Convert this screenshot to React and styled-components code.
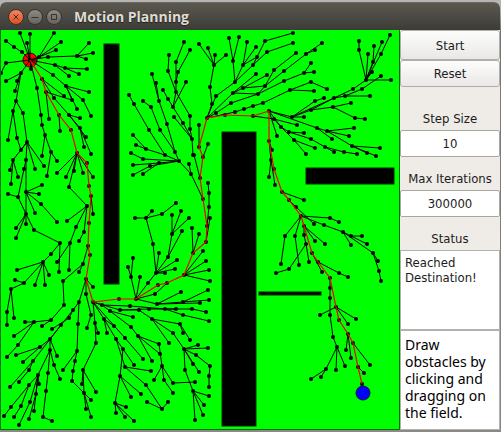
import React from "react";
import styled, { createGlobalStyle } from "styled-components";

const GlobalStyle = createGlobalStyle`
  * { box-sizing: border-box; }
  body { margin: 0; background: #6b6966; }
`;

const Desktop = styled.div`
  padding: 2px 1px 2px 0;
  background: linear-gradient(#b4b4b4, #b4b4b4 8px, #777471 30px, #8b8986);
  font-family: "DejaVu Sans Condensed", "DejaVu Sans", sans-serif;
  font-size: 13px;
  color: #1c1c1c;
`;

const AppWindow = styled.main`
  border-radius: 6px 6px 0 0;
  overflow: hidden;
  background: #efebe7;
`;

const TitleBar = styled.header`
  display: flex;
  align-items: center;
  gap: 3px;
  height: 28px;
  padding: 0 8px;
  background: linear-gradient(#5b5850, #3c3b37);
  border-top: 1px solid #6a675f;
`;

const WindowButton = styled.button`
  display: flex;
  width: 16px;
  height: 16px;
  padding: 0;
  border: 1px solid #35342f;
  border-radius: 50%;
  color: #34332e;
  background: ${(p) =>
    p.$close
      ? "linear-gradient(#f58560, #e2501f)"
      : "linear-gradient(#8c8a82, #66645d)"};
`;

const Title = styled.h1`
  margin: 0 0 0 9px;
  font: bold 14px/20px "Open Sans", "Noto Sans", sans-serif;
  color: #dfdbd2;
  text-shadow: 0 1px 1px #222;
`;

const Content = styled.div`
  display: grid;
  grid-template-columns: minmax(0, 1fr) 100px;
`;

const Field = styled.svg`
  display: block;
  width: 100%;
  height: auto;
  background: #00ff00;
`;

const Sidebar = styled.form`
  display: flex;
  flex-direction: column;
`;

const ActionButton = styled.button`
  height: ${(p) => (p.$tall ? 30 : 27)}px;
  padding: 0;
  border: 1px solid #b1ada9;
  border-radius: 3px;
  background: linear-gradient(#fdfdfd, #eae8e6);
  font: inherit;
  color: inherit;
`;

const Group = styled.div`
  display: flex;
  flex-direction: column;
`;

const Label = styled.label`
  padding-top: ${(p) => (p.$spaced ? 24 : 14)}px;
  line-height: 16px;
  padding-bottom: 3px;
  text-align: center;
  white-space: nowrap;
`;

const NumberBox = styled.input`
  width: 100%;
  height: 27px;
  padding: 0;
  border: 1px solid #aaa6a2;
  border-radius: 2px;
  background: #fff;
  font: inherit;
  color: inherit;
  text-align: center;
`;

const StatusBox = styled.textarea`
  display: block;
  width: 100%;
  height: 81px;
  padding: 4px;
  border: 1px solid #b4b0ac;
  border-bottom-width: 2px;
  outline: none;
  resize: none;
  overflow: hidden;
  background: #fff;
  font: inherit;
  line-height: 15px;
  color: inherit;
`;

const Help = styled.p`
  flex: 1;
  margin: 0;
  padding: 5px 4px;
  border: 1px solid #b4b0ac;
  border-top: 0;
  background: #fff;
  color: #000;
  font: 14px/17px "Noto Sans", sans-serif;
`;

const PATH =
  "30,60 42,79 46,92 59,115 71,130 77,153 87,163 89,186 91,196 89,223 88,246 90,255 86,279 93,302 119,299 136,299 158,285 167,283 184,275 193,253 206,242 207,226 203,199 200,178 203,157 199,147 207,118 225,115 253,116 269,111 269,141 274,169 282,192 289,200 301,216 304,226 312,253 318,262 330,278 336,307 339,320 348,334 353,343 358,367 362,384";

const BRANCHES = `
30,60 20,33|30,60 30,34|30,60 27,43|30,60 22,52 14,47 6,41|30,60 6,63 1,73
30,60 39,57 54,33|39,57 61,42|39,57 56,50|30,60 48,57 77,56 89,43|77,56 93,53|77,56 86,59
30,60 55,65 65,68 87,69|55,65 69,76|65,68 79,74|30,60 53,75 66,86 89,92|66,86 83,100 91,116
66,86 72,100|66,86 77,109|30,60 31,69|30,60 37,88 41,115 42,125 45,135 42,156|45,135 51,152
30,60 21,73 6,81|21,73 17,81|21,73 15,91|21,73 16,101 13,111 8,140|13,111 17,138 21,150|16,101 23,113 27,142
42,79 64,96|42,79 54,98 69,115 80,118|46,92 72,100|46,92 49,119|69,115 80,128 84,147|69,115 86,137|80,128 91,154|59,115 60,131
77,153 57,173|77,153 66,177|77,153 74,171|77,153 83,173|77,153 93,177|77,153 69,187 87,206 67,221
87,206 76,227 70,243 69,270|70,243 57,262|87,206 84,232 79,241|91,196 93,214
27,142 13,160 10,170|13,160 11,184|13,160 18,177|27,142 21,150|27,142 26,160 24,169 18,197 8,194|18,197 26,214
27,142 35,169|27,142 44,166|26,160 26,192 42,185|26,192 39,194|26,192 41,204 57,222|26,192 35,213|26,192 26,214
26,214 16,228|26,214 16,238|26,214 26,224|26,214 34,230 60,243 51,254 43,262 17,270|60,243 59,272
43,262 24,283 15,280|43,262 35,285|43,262 45,285|43,262 49,275|24,283 11,289 7,312 7,325|11,289 14,318
51,152 47,176|51,152 57,161|88,246 83,264 79,272|83,264 63,281 64,305 51,320 34,322 25,322|51,320 42,326
34,322 14,336|34,322 18,345 7,357|86,279 93,287|86,279 86,294 91,315 87,328
86,279 79,302 73,310 69,318 52,329|79,302 78,324 77,351 63,370|77,351 75,361 73,371 72,381 84,393
73,310 61,325 50,339 40,347 16,355|40,347 23,362|50,339 57,356|61,325 33,361 29,370 19,382|33,361 10,387
50,339 50,350 38,375|50,350 54,365 60,379|50,350 48,373 46,391 43,417 52,421
38,375 29,385 11,407 4,416|29,385 21,406 14,417|38,375 30,402 19,425|38,375 36,394 29,419|38,375 34,411|38,375 39,384
93,302 95,323 96,343 83,370|95,323 98,333|83,370 82,384|83,370 96,392|83,370 84,393 91,400|84,393 86,409|84,393 91,417
93,302 102,305 130,306 165,309 192,309 206,312|93,302 120,310 149,309 176,309|165,309 183,315 209,321|102,305 110,311 133,317
120,310 139,310 152,319 180,324 183,333|180,324 190,340|152,319 173,333 184,349|152,319 169,343
184,349 198,345|184,349 208,348|184,349 196,355 210,366 209,376 209,387|184,349 193,364|184,349 199,372|184,349 185,370 193,391
193,391 209,396|193,391 204,405|193,391 203,415|193,391 195,420
110,311 131,327 138,336 159,344|138,336 160,354|138,336 152,361|159,344 162,366 154,380|162,366 164,380 173,393|162,366 173,383 195,382
93,302 104,319 114,326|104,319 107,333|93,302 125,338 143,359|104,319 116,339 123,349 134,365|116,339 125,367 151,371
125,367 146,385 162,409 147,402|162,409 168,402|123,349 120,376 131,397|120,376 141,394|120,376 115,403 126,407|115,403 116,413|115,403 125,417|115,403 134,421
136,299 155,294 167,283|136,299 148,283 156,273|136,299 140,277|136,299 131,277 133,258|131,277 128,267
136,299 157,304 181,292|157,304 183,302 208,290|183,302 209,300|157,304 200,303
184,275 210,281|184,275 209,270|184,275 206,261|184,275 203,251
156,273 159,253|156,273 177,260|156,273 175,269|156,273 165,273|156,273 168,257 182,231|168,257 172,234 172,215|172,234 181,211|172,234 189,218
156,273 153,244 146,218 135,218|146,218 152,211|146,218 162,214 176,203
193,253 192,228|193,253 199,234|206,242 210,218|207,226 209,207 209,193 208,183
203,199 191,174 189,164|191,174 179,161|200,178 194,155|203,157 208,144|199,147 199,125
179,161 165,155|179,161 175,152|179,161 159,163 133,165|179,161 143,159 131,153|179,161 150,166 133,175|159,163 143,174
193,155 192,139 174,117|192,139 183,123 173,107|192,139 190,129 190,116 176,92
173,107 168,99 163,90|173,107 186,82|173,107 176,92 176,82 178,72 190,50|176,82 176,62 184,42|176,92 168,71 169,55
175,152 167,124 159,101 156,83|159,101 152,74|175,152 160,130 151,107 143,101|165,155 149,130 134,104 129,95
165,155 146,149 133,135|146,149 136,145
207,118 212,104 210,87 214,65 199,44|214,65 208,48|214,65 215,55|214,65 226,55
207,118 216,96 235,82 233,61 229,38|233,61 239,37|235,82 243,65 247,42|243,65 256,47|243,65 257,57
235,82 253,65 265,41 293,33|253,65 267,52 293,43|207,118 233,93 256,74|233,93 243,88
207,118 216,113 231,103 258,94|207,118 235,112 244,109 253,106 263,103 290,90 311,82 327,89|290,90 314,91
243,88 265,86 274,70 296,53|243,88 267,75|265,86 284,71 306,54 315,50|306,54 322,43|233,93 258,94
258,94 265,86|258,94 284,81 304,73 311,63|304,73 314,72
253,116 274,119 297,125|269,111 277,136|269,111 281,127|269,111 292,117 304,117
292,117 315,101 324,98|292,117 311,110 334,98 345,96 370,96|292,117 334,98 353,89 366,80|345,96 362,89 381,76
311,110 333,107 351,103|333,107 355,118 365,119
366,80 391,80|366,80 359,50 359,41|366,80 368,54|366,80 373,62 374,46|366,80 372,72|366,80 381,54 390,35|366,80 382,42
274,119 281,127 289,132 304,133|269,111 317,128 327,131 354,128|327,131 349,136|327,131 352,146 380,148|352,146 367,153|352,146 376,156
317,128 332,139|289,132 311,139 325,147 334,152|325,147 344,152 357,154|281,127 294,140 315,148|294,140 306,154
269,141 272,150|269,141 271,160 269,177|271,160 275,185|282,192 304,200|289,200 296,207 314,224
301,216 330,218 339,222|301,216 324,225 343,232 351,245|343,232 351,236 362,236|351,236 367,244
343,232 373,253 378,261|373,253 379,271 381,281
301,216 285,236 281,264|301,216 295,236 299,265|304,226 304,235 306,244 289,269 276,273|306,244 309,262|304,226 315,241|304,226 325,244
312,253 322,272|318,262 339,273 348,277
330,278 330,288 330,298 330,315 333,337 337,347 326,369 311,379|326,369 321,377|337,347 336,370|337,347 345,366
336,307 320,315|336,307 348,324|336,307 356,319|348,334 346,350|348,334 351,358|353,343 370,365|358,367 364,373
`.trim().split(/[|\n]/);

const OBSTACLES = [
  { x: 104, y: 44, width: 15, height: 240 },
  { x: 222, y: 132, width: 34, height: 294 },
  { x: 306, y: 168, width: 88, height: 16 },
  { x: 259, y: 292, width: 62, height: 3 },
];

const NODES = [...new Set([...BRANCHES, PATH].join(" ").split(" "))].map((p) =>
  p.split(",").map(Number)
);

function PlannerField() {
  return (
    <Field viewBox="0 30 400 400" role="img" aria-label="Search tree and obstacles">
      {OBSTACLES.map((o) => (
        <rect key={`${o.x}-${o.y}`} {...o} stroke="#002a00" />
      ))}
      <circle cx="30" cy="60" r="7" fill="#f00" stroke="#400" />
      {BRANCHES.map((points) => (
        <polyline key={points} points={points} fill="none" stroke="#000" />
      ))}
      {NODES.map(([x, y]) => (
        <circle key={`${x}-${y}`} cx={x} cy={y} r="2" />
      ))}
      <polyline points={PATH} fill="none" stroke="#f00000" strokeWidth="1.2" />
      <circle cx="363" cy="393" r="7" fill="#00f" stroke="#001040" />
      <path d="M.5 30V429.5H399.5V30" fill="none" stroke="#087008" />
    </Field>
  );
}

function Glyph({ d }) {
  return (
    <svg width="14" height="14" viewBox="0 0 14 14" fill="none" stroke="currentColor" aria-hidden="true">
      <path d={d} />
    </svg>
  );
}

export default function App() {
  return (
    <Desktop>
      <GlobalStyle />
      <AppWindow>
        <TitleBar>
          <WindowButton $close aria-label="Close">
            <Glyph d="M4.5 4.5l5 5M9.5 4.5l-5 5" />
          </WindowButton>
          <WindowButton aria-label="Minimize">
            <Glyph d="M3.5 7.5h7" />
          </WindowButton>
          <WindowButton aria-label="Maximize">
            <Glyph d="M4.5 4.5h5v5h-5z" />
          </WindowButton>
          <Title>Motion Planning</Title>
        </TitleBar>
        <Content>
          <PlannerField />
          <Sidebar onSubmit={(e) => e.preventDefault()}>
            <ActionButton type="button" $tall>Start</ActionButton>
            <ActionButton type="button">Reset</ActionButton>
            <Group>
              <Label htmlFor="step" $spaced>Step Size</Label>
              <NumberBox id="step" inputMode="numeric" defaultValue="10" />
            </Group>
            <Group>
              <Label htmlFor="iterations">Max Iterations</Label>
              <NumberBox id="iterations" inputMode="numeric" defaultValue="300000" />
            </Group>
            <Group>
              <Label htmlFor="status">Status</Label>
              <StatusBox id="status" readOnly value="Reached Destination!" />
            </Group>
            <Help>Draw obstacles by clicking and dragging on the field.</Help>
          </Sidebar>
        </Content>
      </AppWindow>
    </Desktop>
  );
}
